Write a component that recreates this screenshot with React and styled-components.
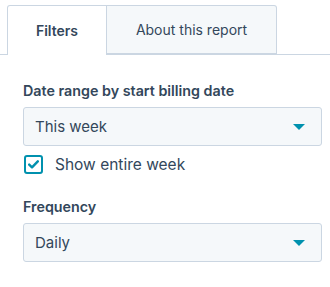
import styled, { createGlobalStyle } from 'styled-components';

const GlobalStyle = createGlobalStyle`
    body {
        margin: 0;
        background: #fff;
        font-family: Inter, "Noto Sans", sans-serif;
        color: #33475b;
    }
`

const Panel = styled.div`
    width: 330px;
    height: 287px;
    padding-top: 5px;
    box-sizing: border-box;
`

const TabBar = styled.div`
    display: flex;
    padding-left: 7px;
    border-bottom: 1px solid #cbd6e2;
    height: 49px;
`

const Tab = styled.div`
    display: flex;
    align-items: center;
    justify-content: center;
    width: ${(props) => props.$width}px;
    height: ${(props) => (props.$active ? 50 : 49)}px;
    box-sizing: border-box;
    border: 1px solid #cbd6e2;
    border-bottom: ${(props) => (props.$active ? 'none' : '1px solid #cbd6e2')};
    border-left: ${(props) => (props.$first ? '1px solid #cbd6e2' : 'none')};
    border-radius: ${(props) => (props.$first ? '3px 0 0 0' : '0 3px 0 0')};
    background-color: ${(props) => (props.$active ? '#fff' : '#f5f8fa')};
    font-size: 14px;
    font-weight: ${(props) => (props.$active ? 600 : 400)};
    color: #33475b;
    position: relative;
    z-index: ${(props) => (props.$active ? 1 : 0)};
`

const Body = styled.div`
    display: flex;
    flex-direction: column;
    padding: 26px 8px 0 23px;
`

const Field = styled.div`
    display: flex;
    flex-direction: column;
    margin-bottom: ${(props) => props.$mb || 0}px;
`

const Label = styled.div`
    font-size: 14.3px;
    font-weight: 600;
    line-height: 20px;
    margin-bottom: 6px;
`

const Select = styled.div`
    display: flex;
    align-items: center;
    justify-content: space-between;
    height: 39px;
    box-sizing: border-box;
    padding: 0 16px 0 11px;
    background-color: #f5f8fa;
    border: 1px solid #cbd6e2;
    border-radius: 3px;
    font-size: 15px;
`

const Caret = styled.span`
    width: 0;
    height: 0;
    border-left: 6px solid transparent;
    border-right: 6px solid transparent;
    border-top: 6px solid #0091ae;
`

const CheckRow = styled.label`
    display: flex;
    align-items: center;
    gap: 12px;
    margin-top: 9px;
    height: 19px;
    font-size: 15.5px;
`

const Box = styled.span`
    width: 19px;
    height: 19px;
    box-sizing: border-box;
    border: 2px solid #0091ae;
    border-radius: 3px;
    display: flex;
    align-items: center;
    justify-content: center;
    margin-left: 1px;
`

export default function App() {
    return (
        <>
            <GlobalStyle />
            <Panel>
                <TabBar>
                    <Tab $width={100} $active $first>Filters</Tab>
                    <Tab $width={170}>About this report</Tab>
                </TabBar>
                <Body>
                    <Field $mb={23}>
                        <Label>Date range by start billing date</Label>
                        <Select>
                            <span>This week</span>
                            <Caret />
                        </Select>
                        <CheckRow>
                            <Box>
                                <svg width="11" height="9" viewBox="0 0 11 9">
                                    <path d="M1.2 4.6 L4 7.3 L9.8 1.3" fill="none" stroke="#0091ae" strokeWidth="2.4" strokeLinecap="round" strokeLinejoin="round" />
                                </svg>
                            </Box>
                            Show entire week
                        </CheckRow>
                    </Field>
                    <Field>
                        <Label>Frequency</Label>
                        <Select>
                            <span>Daily</span>
                            <Caret />
                        </Select>
                    </Field>
                </Body>
            </Panel>
        </>
    );
}
